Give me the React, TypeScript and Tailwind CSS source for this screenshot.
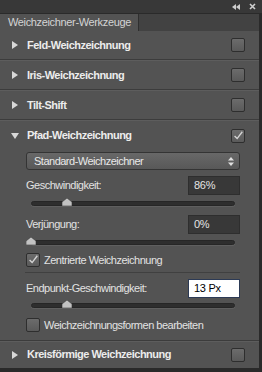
import React from 'react';

const Triangle: React.FC<{ open?: boolean }> = ({ open }) => (
    <svg width="8" height="8" viewBox="0 0 8 8" className="shrink-0">
        {open ? <polygon points="0,1 8,1 4,7" fill="#d8d8d8" /> : <polygon points="1,0 7,4 1,8" fill="#d8d8d8" />}
    </svg>
);

const CheckBox: React.FC<{ checked?: boolean }> = ({ checked }) => (
    <div className="w-[14px] h-[14px] shrink-0 rounded-[2px] border border-[#2e2e2e] bg-gradient-to-b from-[#6c6c6c] to-[#5a5a5a] flex items-center justify-center">
        {checked && (
            <svg width="14" height="14" viewBox="0 0 14 14">
                <path d="M3 7 L6 10 L12 2" stroke="#d4d4d4" strokeWidth="1.6" fill="none" />
            </svg>
        )}
    </div>
);

const Separator = () => (
    <div className="flex flex-col shrink-0">
        <div className="h-px bg-[#3c3c3c]" />
        <div className="h-px bg-[#5d5d5d]" />
    </div>
);

const SectionHeader: React.FC<{ title: string; open?: boolean; checked?: boolean; h: string }> = ({ title, open, checked, h }) => (
    <div className={`${h} shrink-0 flex items-center pl-[11px] pr-[14px]`}>
        <Triangle open={open} />
        <span className="ml-[8px] text-[11px] leading-none tracking-[-0.5px] font-bold text-[#ececec]">{title}</span>
        <div className="ml-auto">
            <CheckBox checked={checked} />
        </div>
    </div>
);

const Slider: React.FC<{ thumb: string }> = ({ thumb }) => (
    <div className="relative h-[10px] mx-[5px]">
        <div className="absolute left-0 right-0 top-[3px] h-[5px] rounded-full bg-[#2e2e2e] border border-[#262626] shadow-[0_1px_0_#5f5f5f]" />
        <svg width="10" height="8" viewBox="0 0 10 8" className={`absolute top-0 ${thumb}`}>
            <polygon points="5,0 10,4 10,8 0,8 0,4" fill="#c2c2c2" stroke="#3a3a3a" strokeWidth="0.6" />
        </svg>
    </div>
);

const ValueRow: React.FC<{ label: string; value: string; active?: boolean }> = ({ label, value, active }) => (
    <div className="h-[19px] flex items-center justify-between">
        <span className="text-[11px] leading-none tracking-[-0.5px] text-[#e2e2e2]">{label}</span>
        <div className={`w-[52px] h-[19px] flex items-center pl-[5px] text-[11px] leading-none tracking-[-0.3px] border ${active ? 'bg-white border-[#2c3a55] text-black' : 'bg-[#383838] border-[#2e2e2e] text-[#e4e4e4]'}`}>
            {value}
        </div>
    </div>
);

export default function App() {
    return (
        <div className="w-[262px] h-[372px] bg-[#2a2a2a] flex flex-col font-['Liberation_Sans',sans-serif] select-none overflow-hidden">
            {/* title bar */}
            <div className="h-[14px] shrink-0 bg-[#383838] border-b border-[#2a2a2a] flex items-center justify-end gap-[9px] pr-[6px]">
                <svg width="8" height="6" viewBox="0 0 8 6">
                    <polygon points="0,3 4,0 4,6" fill="#cfcfcf" />
                    <polygon points="4,3 8,0 8,6" fill="#cfcfcf" />
                </svg>
                <svg width="7" height="7" viewBox="0 0 7 7">
                    <path d="M1 1 L6 6 M6 1 L1 6" stroke="#cfcfcf" strokeWidth="1.6" />
                </svg>
            </div>
            {/* tab bar */}
            <div className="h-[17px] shrink-0 bg-[#424242] flex mr-[3px]">
                <div className="w-[139px] bg-[#535353] border-r border-[#2f2f2f] flex items-center pl-[8px] text-[11px] leading-none tracking-[-0.35px] whitespace-nowrap text-[#d4d4d4]">
                    Weichzeichner-Werkzeuge
                </div>
            </div>
            {/* panel */}
            <div className="flex-1 bg-[#535353] mr-[3px] flex flex-col">
                <SectionHeader title="Feld-Weichzeichnung" h="h-[28px]" />
                <Separator />
                <SectionHeader title="Iris-Weichzeichnung" h="h-[28px]" />
                <Separator />
                <SectionHeader title="Tilt-Shift" h="h-[28px]" />
                <Separator />
                <SectionHeader title="Pfad-Weichzeichnung" open checked h="h-[29px]" />
                <div className="pl-[26px] pr-[19px] flex flex-col shrink-0">
                    <div className="mt-[2px] h-[18px] rounded-[3px] border border-[#343434] bg-gradient-to-b from-[#686868] to-[#585858] flex items-center pl-[7px] pr-[5px] text-[11px] leading-none tracking-[-0.5px] text-[#e8e8e8]">
                        Standard-Weichzeichner
                        <svg width="6" height="9" viewBox="0 0 6 9" className="ml-auto">
                            <polygon points="3,0 6,3.5 0,3.5" fill="#e0e0e0" />
                            <polygon points="0,5.5 6,5.5 3,9" fill="#e0e0e0" />
                        </svg>
                    </div>
                    <div className="mt-[6px]">
                        <ValueRow label="Geschwindigkeit:" value="86%" />
                    </div>
                    <div className="mt-[3px]">
                        <Slider thumb="left-[31px]" />
                    </div>
                    <div className="mt-[7px]">
                        <ValueRow label="Verjüngung:" value="0%" />
                    </div>
                    <div className="mt-[3px]">
                        <Slider thumb="-left-[5px]" />
                    </div>
                    <div className="mt-[6px] h-[14px] flex items-center">
                        <CheckBox checked />
                        <span className="ml-[4px] text-[11px] leading-none tracking-[-0.5px] text-[#e2e2e2]">Zentrierte Weichzeichnung</span>
                    </div>
                    <div className="mt-[5px] -ml-px h-px bg-[#404040]" />
                    <div className="mt-[6px]">
                        <ValueRow label="Endpunkt-Geschwindigkeit:" value="13 Px" active />
                    </div>
                    <div className="mt-[2px]">
                        <Slider thumb="left-[31px]" />
                    </div>
                    <div className="mt-[8px] mb-[8px] h-[14px] flex items-center">
                        <CheckBox />
                        <span className="ml-[4px] text-[11px] leading-none tracking-[-0.5px] text-[#e2e2e2]">Weichzeichnungsformen bearbeiten</span>
                    </div>
                </div>
                <Separator />
                <SectionHeader title="Kreisförmige Weichzeichnung" h="h-[25px]" />
            </div>
            <div className="h-[4px] shrink-0" />
        </div>
    );
}
